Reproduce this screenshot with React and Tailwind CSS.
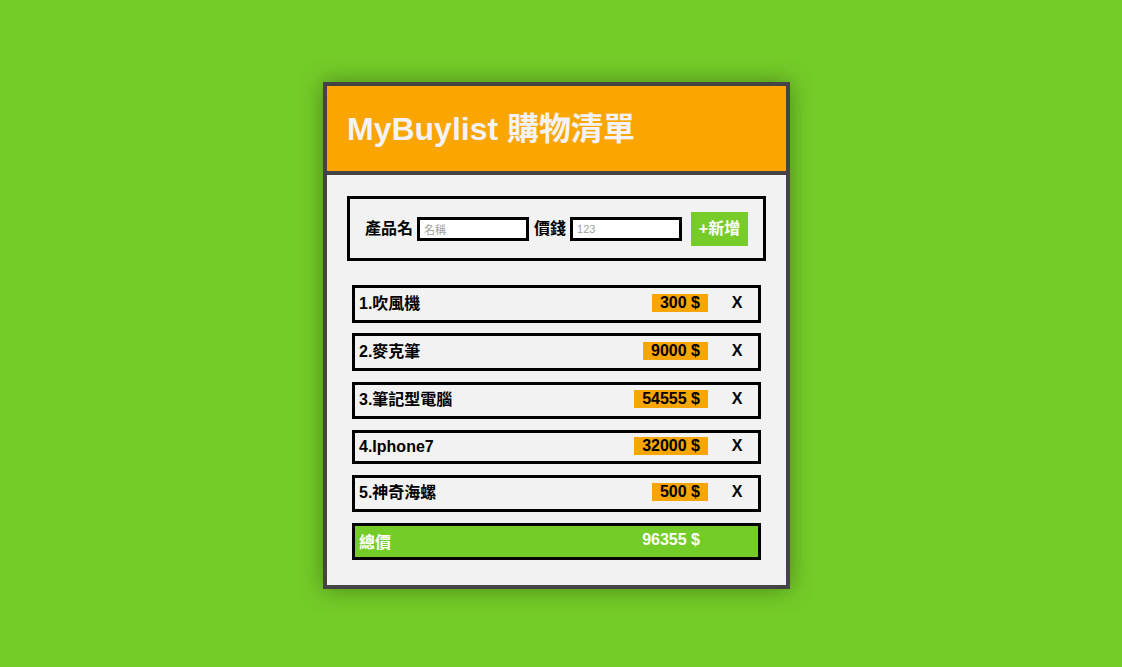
import { useState } from 'react';

const font = { fontFamily: '"Liberation Sans", Arial, "Noto Sans CJK TC", sans-serif' };

export default function App() {
  const [items] = useState([
    { id: 1, name: '吹風機', price: 300, tall: true },
    { id: 2, name: '麥克筆', price: 9000, tall: true },
    { id: 3, name: '筆記型電腦', price: 54555, tall: true },
    { id: 4, name: 'Iphone7', price: 32000, tall: false },
    { id: 5, name: '神奇海螺', price: 500, tall: true },
  ]);

  const total = items.reduce((sum, item) => sum + item.price, 0);

  return (
    <div className="min-h-screen bg-[#74cc28] flex justify-center items-start pt-[82px] pr-[9px]" style={font}>
      <div className="w-[467px] border-4 border-[#444444] bg-[#f2f2f2] shadow-[0_0_22px_rgba(0,0,0,0.35)]">
        {/* Header */}
        <div className="h-[85px] bg-[#faa500] border-b-4 border-[#444444] box-content flex items-center pl-5">
          <h1 className="text-[32px] font-bold text-[#f4f2f4] leading-none">MyBuylist 購物清單</h1>
        </div>

        <div className="pt-[21px] pb-[25px] px-5">
          {/* Add form */}
          <div className="h-[65px] border-[3px] border-black flex items-center pl-[15px] whitespace-nowrap">
            <span className="shrink-0 text-base font-bold text-black">產品名</span>
            <input
              className="shrink-0 ml-1 w-[112px] h-[24px] border-[3px] border-black bg-white px-1 pt-[3px] text-[11px] placeholder:text-[#a0a0a0] outline-none"
              placeholder="名稱"
            />
            <span className="shrink-0 ml-[5px] text-base font-bold text-black">價錢</span>
            <input
              className="shrink-0 ml-1 w-[112px] h-[24px] border-[3px] border-black bg-white px-1 text-[11px] placeholder:text-[#a0a0a0] outline-none"
              placeholder="123"
            />
            <button className="shrink-0 ml-[9px] h-[34px] w-[57px] bg-[#78cc2a] text-white text-base font-bold">+新增</button>
          </div>

          {/* List */}
          <div className="mt-[24px] mx-[5px] flex flex-col gap-[10.75px]">
            {items.map((item, i) => (
              <div
                key={item.id}
                className={`${item.tall ? 'h-[37.5px]' : 'h-[34px]'} border-[3px] border-black flex items-center pl-[4px]`}
              >
                <span className="flex-1 text-base font-bold text-black">
                  {i + 1}.{item.name}
                </span>
                <span className="bg-[#faa500] px-2 text-base font-bold text-black leading-[18px] -mt-[2px]">
                  {item.price} $
                </span>
                <span className="ml-2 w-[42px] text-center text-base font-bold text-black -mt-[2px]">X</span>
              </div>
            ))}
            <div className="h-[37.5px] border-[3px] border-black bg-[#74cc28] flex items-center pl-[4px]">
              <span className="flex-1 text-base font-bold text-white mt-[2px]">總價</span>
              <span className="px-2 text-base font-bold text-white -mt-[3px]">{total} $</span>
              <span className="w-[50px]" />
            </div>
          </div>
        </div>
      </div>
    </div>
  );
}
